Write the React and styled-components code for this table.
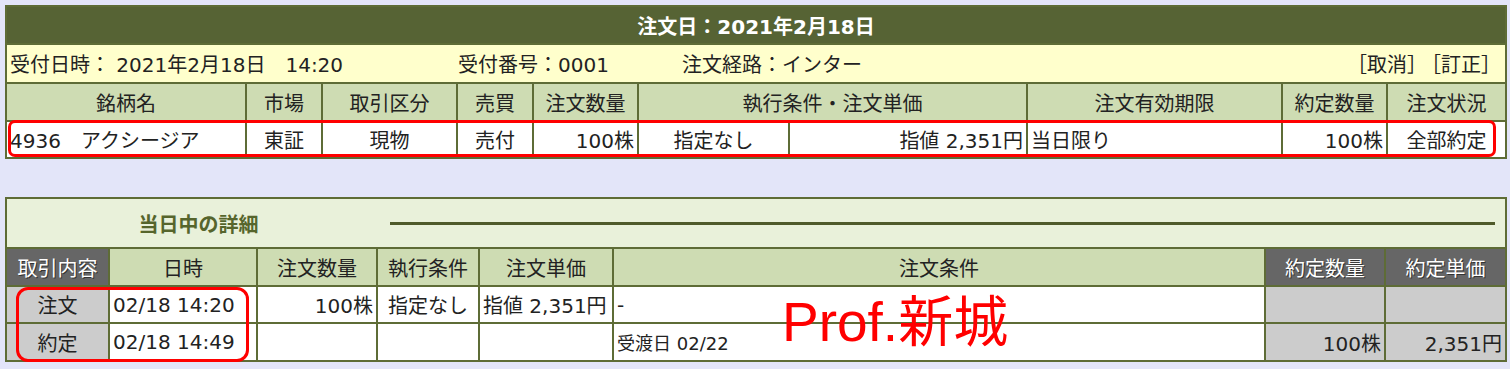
import React from "react";
import styled, { createGlobalStyle } from "styled-components";

const OLIVE = "#566334";
const LINE = "#5e6c36";
const SAGE = "#cedcb3";
const PALE = "#e9f1da";
const CREAM = "#ffffcc";
const DARK = "#666666";
const GREY = "#cccccc";
const RED = "#ff0000";

const GlobalStyle = createGlobalStyle`
  html, body {
    margin: 0;
    padding: 0;
    background: #ffffff;
  }
  body {
    font-family: "DejaVu Sans", "Noto Sans CJK JP", sans-serif;
  }
`;

const App = () => {
  const ORDER_COLS = [240, 76, 135, 76, 105, 151, 238, 255, 105, 119];
  const DETAIL_COLS = [103, 148, 120, 102, 134, 652, 120, 121];

  return (
    <Page>
      <GlobalStyle />
      <Table>
        <colgroup>
          {ORDER_COLS.map((w, i) => (
            <col key={i} style={{ width: w }} />
          ))}
        </colgroup>
        <tbody>
          <Row $h={38}>
            <BannerCell colSpan={10}>注文日：2021年2月18日</BannerCell>
          </Row>
          <Row $h={39}>
            <InfoCell colSpan={10}>
              <InfoBar>
                <InfoItem $w={448}>受付日時： 2021年2月18日　14:20</InfoItem>
                <InfoItem $w={224}>受付番号：0001</InfoItem>
                <InfoItem>注文経路：インター</InfoItem>
                <Actions>
                  <span>［取消］</span>
                  <span>［訂正］</span>
                </Actions>
              </InfoBar>
            </InfoCell>
          </Row>
          <Row $h={38}>
            <Head>銘柄名</Head>
            <Head>市場</Head>
            <Head>取引区分</Head>
            <Head>売買</Head>
            <Head>注文数量</Head>
            <Head colSpan={2}>執行条件・注文単価</Head>
            <Head>注文有効期限</Head>
            <Head>約定数量</Head>
            <Head>注文状況</Head>
          </Row>
          <Row $h={37}>
            <Cell $align="left">4936　アクシージア</Cell>
            <Cell>東証</Cell>
            <Cell>現物</Cell>
            <Cell>売付</Cell>
            <Cell $align="right">100株</Cell>
            <Cell>指定なし</Cell>
            <Cell $align="right">指値 2,351円</Cell>
            <Cell $align="left">当日限り</Cell>
            <Cell $align="right">100株</Cell>
            <Cell>全部約定</Cell>
          </Row>
        </tbody>
      </Table>

      <Gap />

      <Table>
        <colgroup>
          {DETAIL_COLS.map((w, i) => (
            <col key={i} style={{ width: w }} />
          ))}
        </colgroup>
        <tbody>
          <Row $h={50}>
            <TitleCell colSpan={8}>
              <TitleBar>
                <Title>当日中の詳細</Title>
                <Rule />
              </TitleBar>
            </TitleCell>
          </Row>
          <Row $h={38}>
            <Head $dark>取引内容</Head>
            <Head>日時</Head>
            <Head>注文数量</Head>
            <Head>執行条件</Head>
            <Head>注文単価</Head>
            <Head>注文条件</Head>
            <Head $dark>約定数量</Head>
            <Head $dark>約定単価</Head>
          </Row>
          <Row $h={37}>
            <Cell $bg={GREY}>注文</Cell>
            <Cell $align="left">02/18 14:20</Cell>
            <Cell $align="right">100株</Cell>
            <Cell>指定なし</Cell>
            <Cell $align="left">指値 2,351円</Cell>
            <Cell $align="left">-</Cell>
            <Cell $bg={GREY} />
            <Cell $bg={GREY} />
          </Row>
          <Row $h={38}>
            <Cell $bg={GREY}>約定</Cell>
            <Cell $align="left">02/18 14:49</Cell>
            <Cell />
            <Cell />
            <Cell />
            <Cell $align="left" $small>
              受渡日 02/22
            </Cell>
            <Cell $bg={GREY} $align="right">
              100株
            </Cell>
            <Cell $bg={GREY} $align="right">
              2,351円
            </Cell>
          </Row>
        </tbody>
      </Table>

      <Mark $x={8} $y={120} $w={1488} $h={37} $r={7} />
      <Mark $x={16} $y={287} $w={233} $h={75} $r={12} />
      <Signature>Prof.新城</Signature>
    </Page>
  );
};

const Page = styled.div`
  position: relative;
  width: 1500px;
  padding: 5px 5px 7px;
  background: #e3e5f9;
`;

const Gap = styled.div`
  height: 38px;
`;

const Table = styled.table`
  width: 1500px;
  table-layout: fixed;
  border-collapse: collapse;
  border: 2px solid ${LINE};
  font-size: 20px;
  color: #222222;
`;

const Row = styled.tr`
  height: ${props => props.$h}px;
`;

const Cell = styled.td`
  border: 2px solid ${LINE};
  padding: 0 3px;
  text-align: ${props => props.$align || "center"};
  background: ${props => props.$bg || "#ffffff"};
  font-size: ${props => (props.$small ? "18px" : "20px")};
  white-space: nowrap;
  overflow: hidden;
`;

const Head = styled.th`
  border: 2px solid ${LINE};
  padding: 0 3px;
  font-weight: normal;
  text-align: center;
  white-space: nowrap;
  background: ${props => (props.$dark ? DARK : SAGE)};
  color: ${props => (props.$dark ? "#ffffff" : "#222222")};
  text-shadow: ${props => (props.$dark ? "1px 1px 0 #333" : "none")};
`;

const BannerCell = styled.td`
  background: ${OLIVE};
  color: #ffffff;
  font-weight: bold;
  text-align: center;
  border: 2px solid ${LINE};
`;

const InfoCell = styled.td`
  background: ${CREAM};
  border: 2px solid ${LINE};
  padding: 0 4px 0 3px;
`;

const InfoBar = styled.div`
  display: flex;
  align-items: center;
  white-space: nowrap;
`;

const InfoItem = styled.span`
  flex: ${props => (props.$w ? `0 0 ${props.$w}px` : "1 1 auto")};
`;

const Actions = styled.span`
  flex: none;
  display: flex;
  gap: 0;

  & > span + span {
    margin-left: -6px;
  }
`;

const TitleCell = styled.td`
  background: ${PALE};
  border: 2px solid ${LINE};
  padding: 0;
`;

const TitleBar = styled.div`
  display: flex;
  align-items: center;
`;

const Title = styled.span`
  flex: 0 0 383px;
  text-align: center;
  font-weight: bold;
  color: #56652c;
`;

const Rule = styled.div`
  flex: 1;
  height: 3px;
  margin-right: 10px;
  background: #4f5a2a;
`;

const Mark = styled.div`
  position: absolute;
  left: ${props => props.$x}px;
  top: ${props => props.$y}px;
  width: ${props => props.$w}px;
  height: ${props => props.$h}px;
  box-sizing: border-box;
  border: 3px solid ${RED};
  border-radius: ${props => props.$r}px;
  pointer-events: none;
`;

const Signature = styled.span`
  position: absolute;
  left: 782px;
  top: 295px;
  font-family: "Liberation Sans", "Noto Sans CJK JP", sans-serif;
  font-size: 55px;
  line-height: 55px;
  color: ${RED};
  white-space: nowrap;
`;

export default App;
